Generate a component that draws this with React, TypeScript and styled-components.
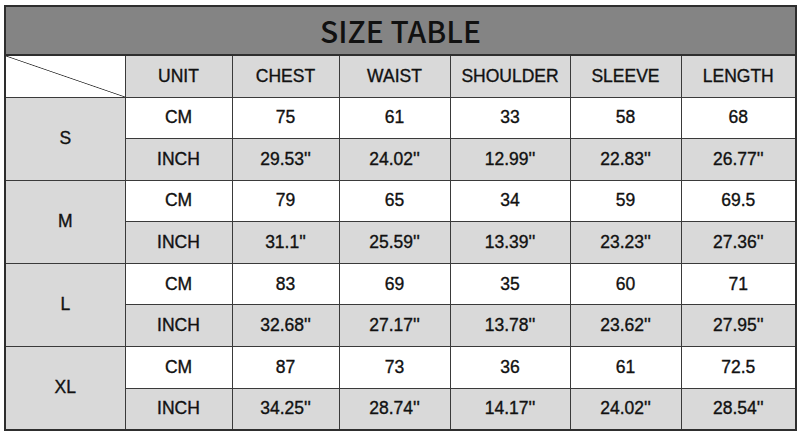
import React from 'react';
import styled, {createGlobalStyle} from 'styled-components';

const GlobalStyle = createGlobalStyle`
  html, body {
    margin: 0;
    padding: 0;
    background: #ffffff;
  }
  body {
    font-family: "Liberation Sans", Arial, sans-serif;
    color: #111111;
  }
`

type Size = {
    label: string
    cm: string[]
    inch: string[]
}

const columns = ['CHEST', 'WAIST', 'SHOULDER', 'SLEEVE', 'LENGTH']
const widths = [120, 107, 107, 111, 120, 111, 115]

const sizes: Size[] = [
    {label: 'S', cm: ['75', '61', '33', '58', '68'], inch: ["29.53''", "24.02''", "12.99''", "22.83''", "26.77''"]},
    {label: 'M', cm: ['79', '65', '34', '59', '69.5'], inch: ["31.1''", "25.59''", "13.39''", "23.23''", "27.36''"]},
    {label: 'L', cm: ['83', '69', '35', '60', '71'], inch: ["32.68''", "27.17''", "13.78''", "23.62''", "27.95''"]},
    {label: 'XL', cm: ['87', '73', '36', '61', '72.5'], inch: ["34.25''", "28.74''", "14.17''", "24.02''", "28.54''"]},
]

export default function App() {
    return (
        <>
            <GlobalStyle/>
            <Page>
                <Table>
                    <colgroup>
                        {widths.map((w, i) => <col key={i} style={{width: w}}/>)}
                    </colgroup>
                    <thead>
                    <tr>
                        <Title colSpan={7}>SIZE TABLE</Title>
                    </tr>
                    <HeaderRow>
                        <Corner/>
                        <Cell $shade>UNIT</Cell>
                        {columns.map(c => <Cell key={c} $shade>{c}</Cell>)}
                    </HeaderRow>
                    </thead>
                    <tbody>
                    {sizes.map(s => (
                        <React.Fragment key={s.label}>
                            <DataRow>
                                <SizeCell rowSpan={2}>{s.label}</SizeCell>
                                <Cell>CM</Cell>
                                {s.cm.map((v, i) => <Cell key={i}>{v}</Cell>)}
                            </DataRow>
                            <DataRow>
                                <Cell $shade>INCH</Cell>
                                {s.inch.map((v, i) => <Cell key={i} $shade>{v}</Cell>)}
                            </DataRow>
                        </React.Fragment>
                    ))}
                    </tbody>
                </Table>
            </Page>
        </>
    );
}

const Page = styled.div`
  padding: 5px 0 0 4px;
`
const Table = styled.table`
  border-collapse: collapse;
  table-layout: fixed;
  width: 791px;
  border: 2px solid #2e2e2e;
`
const Title = styled.th`
  height: 46px;
  padding: 0 0 1px;
  background: #848484;
  border: 2px solid #2e2e2e;
  font-family: "Noto Sans CJK SC", "Liberation Sans", sans-serif;
  font-size: 30px;
  font-weight: 500;
  color: #111111;
  text-align: center;
  vertical-align: middle;
  line-height: 1;
`
const HeaderRow = styled.tr`
  height: 42px;
`
const DataRow = styled.tr`
  height: 41.6px;
`
const Cell = styled.td<{ $shade?: boolean }>`
  padding: 0;
  border: 1.5px solid #3a3a3a;
  background: ${p => p.$shade ? '#d9d9d9' : '#ffffff'};
  font-size: 17.5px;
  text-align: center;
  vertical-align: middle;
  white-space: nowrap;
  -webkit-text-stroke: 0.35px #111111;
`
const Corner = styled.td`
  padding: 0;
  border: 1.5px solid #3a3a3a;
  background: linear-gradient(to top right, transparent calc(50% - 0.8px), #3a3a3a 50%, transparent calc(50% + 0.8px)) #ffffff;
`
const SizeCell = styled(Cell)`
  background: #d9d9d9;
`
